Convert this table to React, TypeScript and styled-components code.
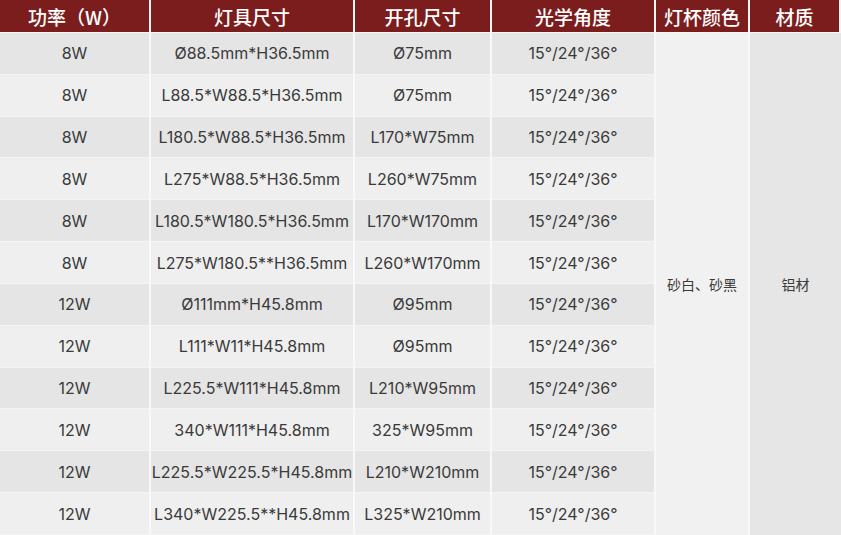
import styled, { createGlobalStyle } from 'styled-components';

const GlobalStyle = createGlobalStyle`
  html, body {
    margin: 0;
    padding: 0;
    background: #ffffff;
  }
`;

const rows = [
  ['8W', 'Ø88.5mm*H36.5mm', 'Ø75mm'],
  ['8W', 'L88.5*W88.5*H36.5mm', 'Ø75mm'],
  ['8W', 'L180.5*W88.5*H36.5mm', 'L170*W75mm'],
  ['8W', 'L275*W88.5*H36.5mm', 'L260*W75mm'],
  ['8W', 'L180.5*W180.5*H36.5mm', 'L170*W170mm'],
  ['8W', 'L275*W180.5**H36.5mm', 'L260*W170mm'],
  ['12W', 'Ø111mm*H45.8mm', 'Ø95mm'],
  ['12W', 'L111*W11*H45.8mm', 'Ø95mm'],
  ['12W', 'L225.5*W111*H45.8mm', 'L210*W95mm'],
  ['12W', '340*W111*H45.8mm', '325*W95mm'],
  ['12W', 'L225.5*W225.5*H45.8mm', 'L210*W210mm'],
  ['12W', 'L340*W225.5**H45.8mm', 'L325*W210mm'],
];

const headers = ['功率（W）', '灯具尺寸', '开孔尺寸', '光学角度', '灯杯颜色', '材质'];

function App() {
  return (
    <>
      <GlobalStyle />
      <Table>
        {headers.map((h) => (
          <HeadCell key={h}>{h}</HeadCell>
        ))}
        {rows.map((r, i) => (
          <Row key={i} $odd={i % 2 === 0}>
            <Cell>{r[0]}</Cell>
            <Cell>{r[1]}</Cell>
            <Cell>{r[2]}</Cell>
            <Cell>15°/24°/36°</Cell>
          </Row>
        ))}
        <MergedCell $col={5} $bg="#f1f1f1">砂白、砂黑</MergedCell>
        <MergedCell $col={6} $bg="#e6e6e6">铝材</MergedCell>
      </Table>
    </>
  );
}

export default App;

const Table = styled.div`
  display: grid;
  grid-template-columns: 151px 204px 137px 164px 94px 91px;
  grid-template-rows: 33px repeat(12, 1fr);
  width: 841px;
  height: 535px;
  font-family: Inter, 'Noto Sans CJK SC', sans-serif;
`;

const HeadCell = styled.div`
  display: flex;
  align-items: center;
  justify-content: center;
  background: #7b1d1d;
  color: #ffffff;
  font-family: 'Noto Sans CJK SC', sans-serif;
  font-size: 19px;
  font-weight: 500;
  border-right: 2px solid #f6f6f6;
  border-bottom: 1px solid #f6f6f6;

  &:last-of-type {
    border-right: none;
  }
`;

const Row = styled.div<{ $odd: boolean }>`
  display: contents;

  & > div {
    background: ${(p) => (p.$odd ? '#e5e5e5' : '#efefef')};
  }
`;

const Cell = styled.div`
  display: flex;
  align-items: center;
  justify-content: center;
  color: #3a3a3a;
  font-size: 16px;
  white-space: nowrap;
  border-right: 2px solid #f8f8f8;
  border-bottom: 1px solid #f4f4f4;
`;

const MergedCell = styled.div<{ $col: number; $bg: string }>`
  grid-column: ${(p) => p.$col};
  grid-row: 2 / 14;
  display: flex;
  align-items: center;
  justify-content: center;
  background: ${(p) => p.$bg};
  color: #3a3a3a;
  font-family: 'Noto Sans CJK SC', sans-serif;
  font-size: 14px;
  border-right: ${(p) => (p.$col === 5 ? '2px solid #f8f8f8' : 'none')};
`;
